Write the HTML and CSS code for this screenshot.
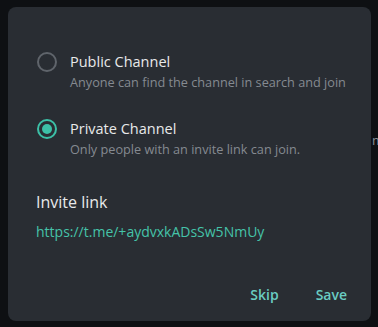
FILE: index.html
```html
<!DOCTYPE html>
<html>
<head>
<meta charset="utf-8">
<link rel="stylesheet" href="styles.css">
</head>
<body>
<div class="behind">m</div>
<div class="dialog">
  <div class="option">
    <svg class="radio" width="20" height="20" viewBox="0 0 20 20"><circle cx="10" cy="10" r="9" fill="none" stroke="#5f646b" stroke-width="2"/></svg>
    <div class="text">
      <div class="title">Public Channel</div>
      <div class="sub">Anyone can find the channel in search and join</div>
    </div>
  </div>
  <div class="option second">
    <svg class="radio" width="20" height="20" viewBox="0 0 20 20"><circle cx="10" cy="10" r="9" fill="none" stroke="#3cc0a7" stroke-width="2"/><circle cx="10" cy="10" r="5" fill="#3cc0a7"/></svg>
    <div class="text">
      <div class="title">Private Channel</div>
      <div class="sub">Only people with an invite link can join.</div>
    </div>
  </div>
  <div class="invite">Invite link</div>
  <div class="link">https://t.me/+aydvxkADsSw5NmUy</div>
  <div class="buttons">
    <span class="btn">Skip</span>
    <span class="btn">Save</span>
  </div>
</div>
</body>
</html>
```
FILE: styles.css
```css
html, body {
  margin: 0;
  padding: 0;
  background: #0e1013;
  font-family: "Open Sans", "DejaVu Sans", sans-serif;
  width: 378px;
  height: 327px;
  overflow: hidden;
  position: relative;
}
.behind {
  position: absolute;
  left: 372px;
  top: 130px;
  width: 6px;
  overflow: hidden;
  color: #8a8f96;
  font-size: 13px;
  line-height: 20px;
}
.dialog {
  position: relative;
  margin: 7px 0 0 8px;
  width: 363px;
  height: 314px;
  box-sizing: border-box;
  background: #292d33;
  border-radius: 8px;
  padding: 45px 24px 16px 28px;
  display: flex;
  flex-direction: column;
}
.option {
  display: flex;
  align-items: flex-start;
  gap: 13px;
  padding-left: 1px;
}
.option.second {
  margin-top: 27px;
}
.radio {
  flex: none;
  display: block;
}
.title {
  font-size: 14.5px;
  line-height: 20px;
  color: #e8e9ea;
}
.sub {
  font-size: 12.7px;
  line-height: 20px;
  color: #858a91;
  white-space: nowrap;
}
.invite {
  margin-top: 32px;
  font-size: 16px;
  line-height: 22px;
  color: #e8e9ea;
}
.link {
  margin-top: 9px;
  font-size: 14px;
  line-height: 20px;
  color: #45c3a9;
}
.buttons {
  margin-top: auto;
  display: flex;
  justify-content: flex-end;
  gap: 37px;
}
.btn {
  font-size: 14px;
  line-height: 20px;
  font-weight: 600;
  color: #6accc2;
}
```
